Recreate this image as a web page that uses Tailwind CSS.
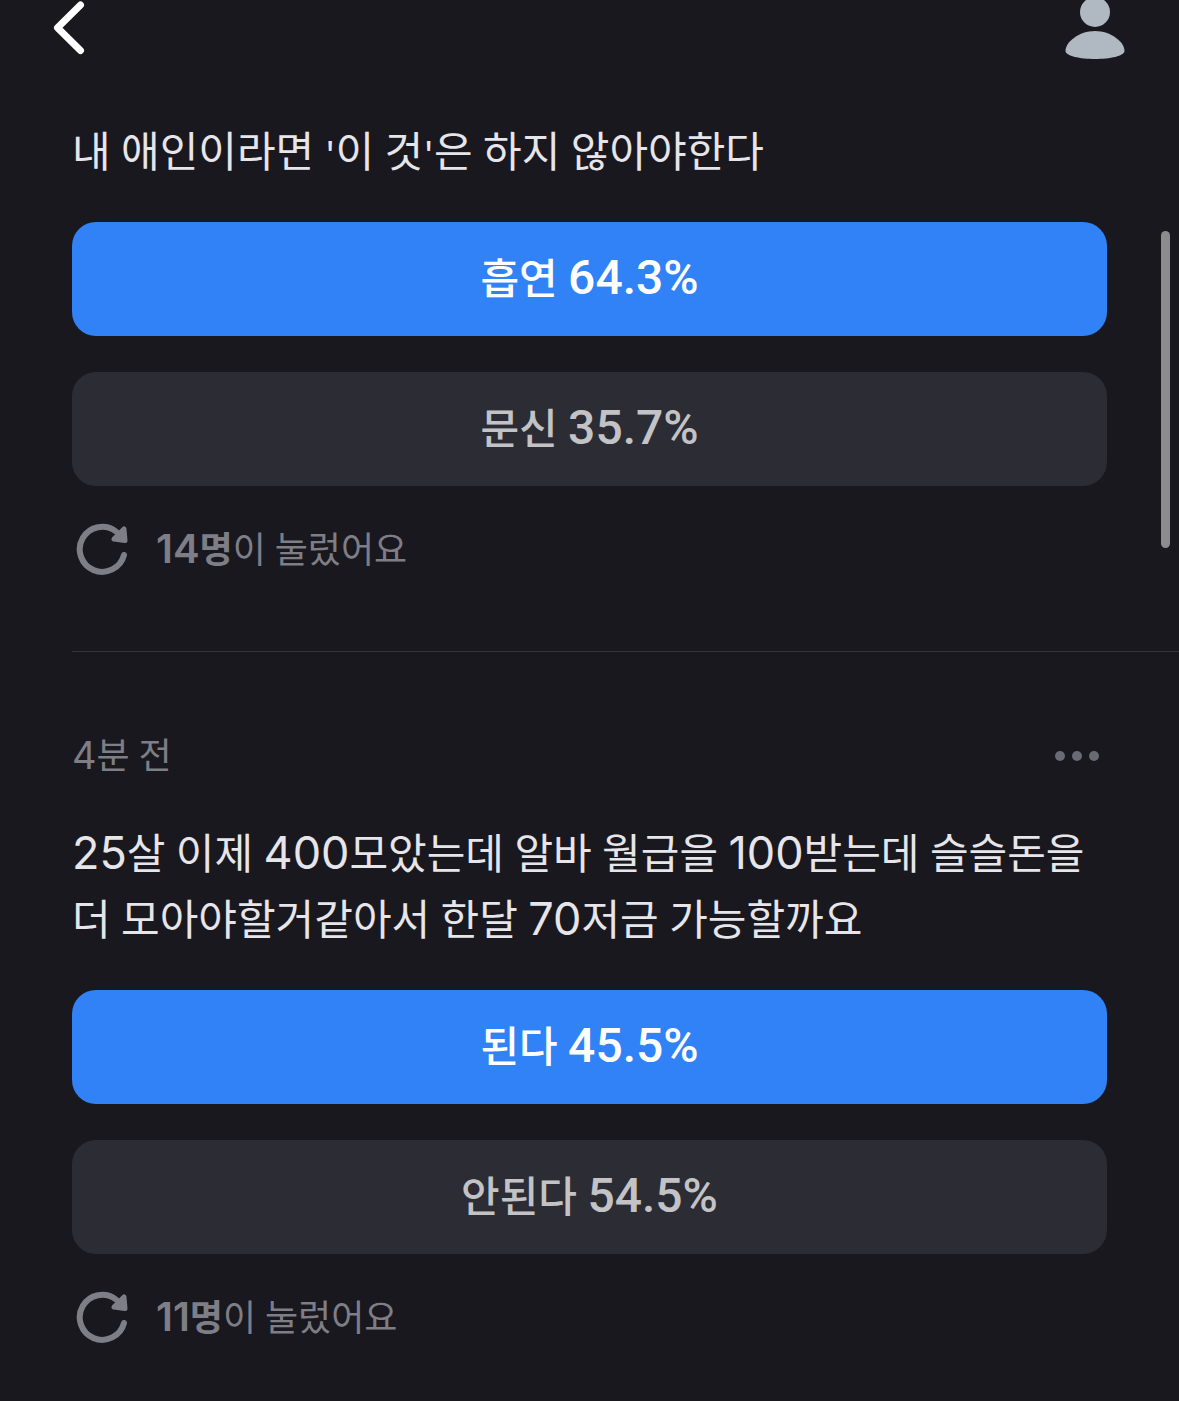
<!DOCTYPE html>
<html lang="ko">
<head>
<meta charset="utf-8">
<meta name="viewport" content="width=device-width, initial-scale=1">
<title>투표</title>
<script src="https://cdn.jsdelivr.net/npm/@tailwindcss/browser@4"></script>
</head>
<body class="relative min-h-screen overflow-x-hidden bg-[#19181e] font-['Roboto','Noto_Sans_CJK_KR',sans-serif] text-[#e6e5ea]">
<header class="flex h-[118px] items-start justify-between pr-[54px] pl-[48px]">
  <button type="button" aria-label="뒤로">
    <svg class="block h-[60px] w-[42px]" viewBox="0 0 42 60" fill="none" stroke="#fff" stroke-width="7" stroke-linecap="round" stroke-linejoin="round"><path d="M32.500 5 9.500 27.700 32.500 50.500"/></svg>
  </button>
  <button type="button" aria-label="내 프로필">
    <svg class="block h-[60px] w-[60px]" viewBox="0 0 60 60" fill="#b0b8c1"><circle cx="30" cy="12" r="15"/><path d="M30 31C46 31 59.500 42 59.500 51C59.500 56 45 59 30 59S.5 56 .5 51C.5 42 14 31 30 31Z"/></svg>
  </button>
</header>
<main>
  <article class="pl-[72px]">
    <div class="flex flex-col gap-[36px] pr-[72px] pb-[75px]">
      <h2 class="pt-[2px] text-[42px] leading-[66px]">내 애인이라면 <span class="font-['Inter'] text-[36px] leading-none">'</span>이 것<span class="font-['Inter'] text-[36px] leading-none">'</span>은 하지 않아야한다</h2>
      <button type="button" class="h-[114px] rounded-[24px] bg-[#3182f6] text-[42px] leading-[66px] font-medium text-white">흡연 <span class="text-[48px]">64.3%</span></button>
      <button type="button" class="h-[114px] rounded-[24px] bg-[#2c2c35] text-[42px] leading-[66px] font-medium text-[#c3c3c6]">문신 <span class="text-[48px]">35.7%</span></button>
      <div class="flex h-[54px] items-center gap-[24px] text-[36px] text-[#7e7e87]">
        <button type="button" aria-label="새로고침">
          <svg class="block h-[54px] w-[60px]" viewBox="0 0 60 54"><path d="M52 33A22.500 22.500 0 1 1 44 9.500" fill="none" stroke="currentColor" stroke-width="6" stroke-linecap="round"/><path d="M52 7 53 18.500 42 17Z" fill="currentColor" stroke="currentColor" stroke-width="5" stroke-linejoin="round"/></svg>
        </button>
        <p class="pt-[2px] leading-[54px]"><b class="font-semibold"><span class="font-['Inter'] text-[40px]">14</span>명</b>이 눌렀어요</p>
      </div>
    </div>
    <hr class="border-[#34343d]">
  </article>
  <article class="pt-[76px] pl-[72px]">
    <div class="flex flex-col gap-[36px] pr-[72px] pb-[56px]">
      <div class="flex h-[56px] items-center justify-between text-[36px] text-[#7e7e87]">
        <time class="leading-[54px]"><span class="font-['Inter'] text-[38px]">4</span>분 전</time>
        <button type="button" aria-label="더보기" class="flex gap-[7px] pr-[8px]">
          <span class="size-[10px] rounded-full bg-[#6a6a74]"></span>
          <span class="size-[10px] rounded-full bg-[#6a6a74]"></span>
          <span class="size-[10px] rounded-full bg-[#6a6a74]"></span>
        </button>
      </div>
      <h2 class="pt-[2px] text-[42px] leading-[66px]"><span class="font-['Inter'] text-[45px] leading-none">25</span>살 이제 <span class="font-['Inter'] text-[45px] leading-none">400</span>모았는데 알바 월급을 <span class="font-['Inter'] text-[45px] leading-none">100</span>받는데 슬슬돈을 <span>더 모아야할거같아서 한달 </span><span class="font-['Inter'] text-[45px] leading-none">70</span>저금 가능할까요</h2>
      <button type="button" class="h-[114px] rounded-[24px] bg-[#3182f6] text-[42px] leading-[66px] font-medium text-white">된다 <span class="text-[48px]">45.5%</span></button>
      <button type="button" class="h-[114px] rounded-[24px] bg-[#2c2c35] text-[42px] leading-[66px] font-medium text-[#c3c3c6]">안된다 <span class="text-[48px]">54.5%</span></button>
      <div class="flex h-[54px] items-center gap-[24px] text-[36px] text-[#7e7e87]">
        <button type="button" aria-label="새로고침">
          <svg class="block h-[54px] w-[60px]" viewBox="0 0 60 54"><path d="M52 33A22.500 22.500 0 1 1 44 9.500" fill="none" stroke="currentColor" stroke-width="6" stroke-linecap="round"/><path d="M52 7 53 18.500 42 17Z" fill="currentColor" stroke="currentColor" stroke-width="5" stroke-linejoin="round"/></svg>
        </button>
        <p class="pt-[2px] leading-[54px]"><b class="font-semibold"><span class="font-['Inter'] text-[40px]">11</span>명</b>이 눌렀어요</p>
      </div>
    </div>
  </article>
</main>
<div class="absolute top-[231px] right-[9px] h-[317px] w-[9px] rounded-full bg-[#8c8c8e]" aria-hidden="true"></div>
</body>
</html>
